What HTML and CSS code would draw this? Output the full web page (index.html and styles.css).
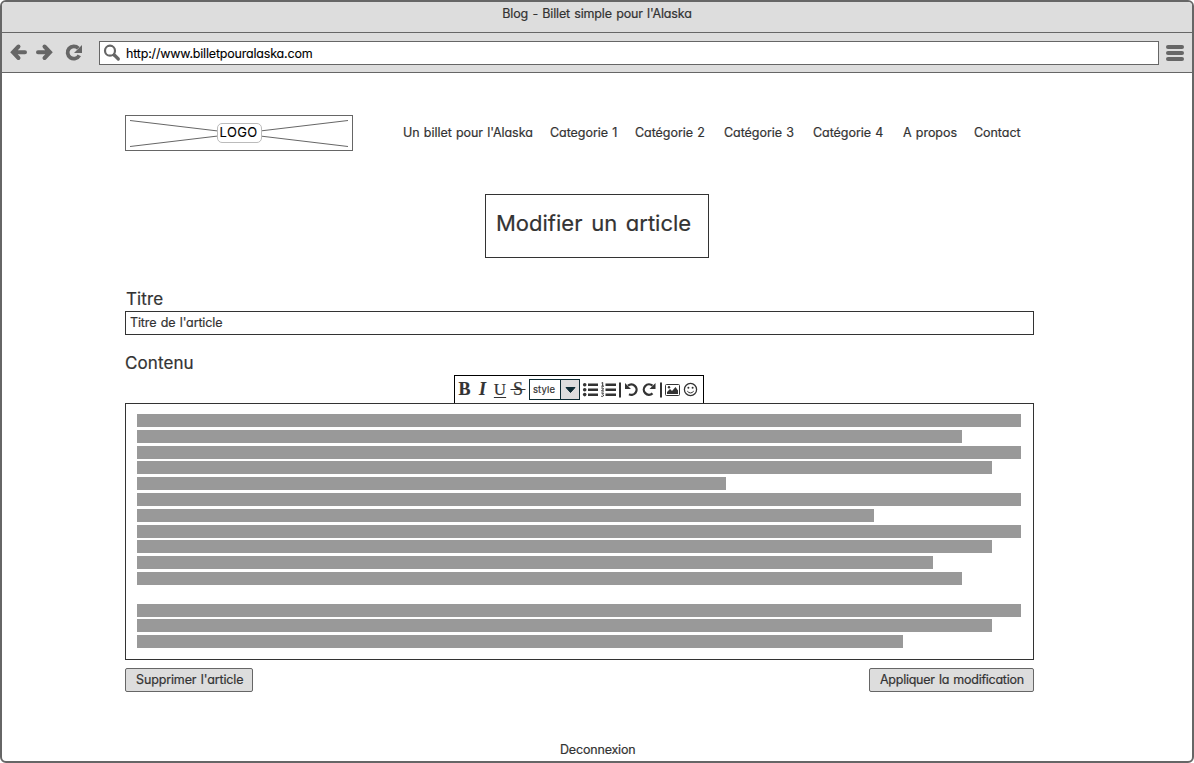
FILE: index.html
```html
<!DOCTYPE html>
<html lang="fr">
<head>
<meta charset="utf-8">
<title>Blog - Billet simple pour l'Alaska</title>
<link rel="stylesheet" href="styles.css">
</head>
<body>
<div class="window">
  <div class="titlebar"><span>Blog - Billet simple pour l'Alaska</span></div>
  <div class="navbar">
    <svg class="nav-icons" width="98" height="38" viewBox="0 0 98 38">
      <g fill="none" stroke="#666" stroke-width="4">
        <path d="M16.500 13.500L11 19.300L16.500 25M12 19.300H23" stroke-linecap="round"/>
        <path d="M42.500 13.500L48 19.300L42.500 25M47 19.300H36" stroke-linecap="round"/>
        <path d="M76.300 15.200A6.200 6.200 0 1 0 77.300 22.400" stroke-width="3.800"/>
      </g>
      <path d="M80 12V20H72Z" fill="#666"/>
    </svg>
    <div class="url">
      <svg width="18" height="18" viewBox="0 0 18 18" fill="none" stroke="#666"><circle cx="7" cy="6.700" r="5" stroke-width="2.200"/><path d="M11.300 11L15.300 15" stroke-width="3.200" stroke-linecap="round"/></svg>
      <span class="url-text">http://www.billetpouralaska.com</span>
    </div>
    <div class="menu"><i></i><i></i><i></i></div>
  </div>
  <main class="page">
    <header class="header">
      <div class="logo">
        <svg width="226" height="34" viewBox="0 0 226 34" stroke="#666"><path d="M4 4.500L222 30.500M4 30.500L222 4.500"/></svg>
        <span class="logo-label">LOGO</span>
      </div>
      <nav class="links">
        <a>Un billet pour l'Alaska</a><a>Categorie 1</a><a>Catégorie 2</a><a>Catégorie 3</a><a>Catégorie 4</a><a>A propos</a><a>Contact</a>
      </nav>
    </header>
    <h1 class="heading"><span>Modifier un article</span></h1>
    <div class="label label-title"><span>Titre</span></div>
    <div class="field"><span>Titre de l'article</span></div>
    <div class="label label-body"><span>Contenu</span></div>
    <div class="tools">
      <span class="fmt bold">B</span><span class="fmt italic">I</span><span class="fmt under">U</span><span class="fmt strike">&nbsp;S&nbsp;</span>
      <div class="select"><span class="select-text">style</span><span class="select-arrow"><svg width="11" height="6" viewBox="0 0 11 6"><path d="M1 .5H10L5.500 5.500Z" fill="#0d2b33" stroke="#0d2b33" stroke-linejoin="round"/></svg></span></div>
      <svg class="tool-icons" width="119" height="20" viewBox="0 0 119 20">
        <g fill="#333">
          <circle cx="4.700" cy="4.700" r="1.800"/><circle cx="4.700" cy="9.700" r="1.800"/><circle cx="4.700" cy="14.600" r="1.800"/>
          <path d="M8 3.500h10v2.500H8zM8 8.500h10v2.500H8zM8 13.500h10v2.500H8zM25.500 3.500h10.500v2.500H25.500zM25.500 8.500h10.500v2.500H25.500zM25.500 13.500h10.500v2.500H25.500z"/>
          <path d="M39 2.500h2v15h-2zM80 2.500h2v15h-2z"/>
        </g>
        <g fill="none" stroke="#333">
          <path d="M21.500 3L22.700 2.500V6M21.300 6.200H24M21.300 8Q23.700 7.500 23.400 9L21.500 11H24M21.300 13H23.500L22.500 14.300Q24 14.700 23.300 16Q22.500 17 21.200 16.200"/>
          <path d="M48 5.700A5.200 5.200 0 1 1 49 14.300" stroke-width="2.300"/>
          <path d="M72.500 5.700A5.200 5.200 0 1 0 72.500 13.400" stroke-width="2.300"/>
          <rect x="85.500" y="4.500" width="14" height="11" rx="1"/>
          <circle cx="110.500" cy="9.500" r="6.100" stroke-width="1.300"/><path d="M107.300 11.200Q110.500 14.700 113.700 11.200"/>
        </g>
        <g fill="#333"><path d="M45 3V9H51ZM75.500 3V9H69.500ZM87 14V12L90 9L92 11L95.500 7L98 10.500V14Z"/><circle cx="89" cy="7.300" r="1.200"/><circle cx="108.400" cy="7.700" r="1"/><circle cx="112.600" cy="7.700" r="1"/></g>
      </svg>
    </div>
    <div class="editor">
      <i class="w884"></i><i class="w825"></i><i class="w884"></i><i class="w855"></i><i class="w589"></i><i class="w884"></i><i class="w737"></i><i class="w884"></i><i class="w855"></i><i class="w796"></i><i class="w825"></i><i class="blank"></i><i class="w884"></i><i class="w855"></i><i class="w766"></i>
    </div>
    <div class="actions">
      <button class="btn delete"><span>Supprimer l'article</span></button>
      <button class="btn apply"><span>Appliquer la modification</span></button>
    </div>
    <footer class="footer"><span>Deconnexion</span></footer>
  </main>
</div>
</body>
</html>
```
FILE: styles.css
```css
* { box-sizing: border-box; }
body {
  margin: 0;
  background: #fff;
  color: #333;
  font: 12.5px/16px Inter, "Liberation Sans", sans-serif;
  font-feature-settings: "cv11" 1;
  letter-spacing: -.13px;
  word-spacing: 1px;
  -webkit-text-stroke: .2px currentColor;
}
svg { display: block; flex: none; }
span, a { white-space: nowrap; }
.window {
  width: 1194px;
  height: 763px;
  border: 2px solid #666;
  border-radius: 6px;
  overflow: hidden;
  display: flex;
  flex-direction: column;
}
.titlebar {
  height: 31px;
  flex: none;
  padding-top: 4px;
  text-align: center;
  background: #ddd;
  border-bottom: 1px solid #666;
  letter-spacing: -.17px;
}
.navbar {
  height: 40px;
  flex: none;
  display: flex;
  align-items: flex-start;
  background: #ddd;
  border-bottom: 1px solid #666;
}
.nav-icons { margin-right: -1px; }
.url {
  width: 1060px;
  height: 24px;
  margin-top: 8px;
  padding: 2px 3px;
  display: flex;
  gap: 5px;
  background: #fff;
  border: 1px solid #666;
  color: #000;
  letter-spacing: -.19px;
  -webkit-text-stroke-width: .1px;
}
.url-text { padding-top: 2px; }
.menu { margin: 12px 0 0 7px; display: grid; gap: 2px; }
.menu i { width: 18px; height: 4px; border-radius: 2px; background: #666; }
.page { padding-left: 123px; width: 1032px; }
.header { display: flex; padding-top: 42px; }
.logo { position: relative; width: 228px; height: 36px; border: 1px solid #666; flex: none; }
.logo-label {
  position: absolute;
  left: 91px;
  top: 7px;
  width: 45px;
  height: 20px;
  padding-right: 2px;
  line-height: 17px;
  font-size: 13px;
  letter-spacing: .3px;
  text-align: center;
  color: #000;
  background: #fff;
  border: 1px solid #bbb;
  border-radius: 5px;
  -webkit-text-stroke-width: .1px;
}
.links {
  display: grid;
  grid-template-columns: 147px 85px 89px 89px 90px 71px 50px;
  margin-left: 50px;
  padding-top: 10px;
  letter-spacing: -.05px;
  word-spacing: .8px;
}
.heading {
  width: 224px;
  height: 64px;
  margin: 43px 0 0 360px;
  padding: 13px 0 0 10px;
  border: 1px solid #333;
  font-size: 22px;
  line-height: 30px;
  font-weight: 400;
  letter-spacing: 0;
  word-spacing: 2.500px;
}
.label { font-size: 17px; line-height: 24px; letter-spacing: .1px; }
.label-title { margin-top: 29px; padding-left: 1px; }
.field { height: 24px; border: 1px solid #333; padding: 3px 4px; }
.label-body { margin-top: 16px; }
.tools {
  display: flex;
  width: 250px;
  height: 28px;
  margin-left: 329px;
  border: 1px solid #000;
  border-bottom: 0;
  letter-spacing: 0;
  word-spacing: 0;
}
.fmt {
  width: 18px;
  height: 27px;
  font: 18px/27px "Liberation Serif", serif;
  text-align: center;
}
.bold { font-weight: 700; padding-left: 1px; }
.italic { font-style: italic; font-weight: 700; padding-left: 1px; }
.under { font-size: 17px; text-decoration: underline 1px; text-underline-offset: 2px; }
.strike { text-decoration: line-through 1px; word-spacing: -2px; }
.select {
  display: flex;
  width: 51px;
  height: 21px;
  margin: 3px 0 0 2px;
  border: 1px solid #0d2b33;
  font-size: 9.500px;
}
.select-text { width: 31px; padding-left: 3px; line-height: 19px; letter-spacing: .1px; border-right: 1px solid #0d2b33; }
.select-arrow { flex: 1; background: #ddd; padding: 7px 0 0 4px; }
.tool-icons { margin-top: 4px; }
.editor {
  height: 257px;
  padding: 10px 11px;
  border: 1px solid #333;
  display: grid;
  grid-auto-rows: 13px;
  row-gap: 2.800px;
}
.editor i { background: #999; }
.editor .blank { background: none; }
.w884 { width: 884px; }
.w855 { width: 855px; }
.w825 { width: 825px; }
.w796 { width: 796px; }
.w766 { width: 766px; }
.w737 { width: 737px; }
.w589 { width: 589px; }
.actions { display: flex; justify-content: space-between; margin-top: 8px; }
.btn {
  height: 24px;
  padding: 0 0 1px 10px;
  text-align: left;
  border: 1px solid #666;
  border-radius: 2px;
  background: #ddd;
  font: inherit;
  font-feature-settings: inherit;
  letter-spacing: inherit;
  word-spacing: inherit;
  color: #333;
}
.delete { width: 128px; }
.apply { width: 165px; letter-spacing: -.26px; }
.footer { padding: 50px 0 0 435px; letter-spacing: -.18px; }
```
